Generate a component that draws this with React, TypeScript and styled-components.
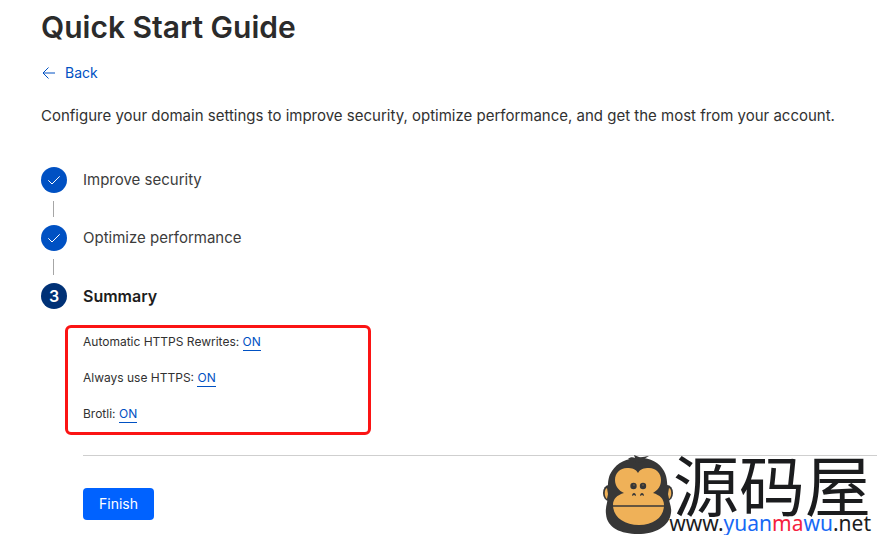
import React from "react";
import styled, { createGlobalStyle, css } from "styled-components";

const GlobalStyle = createGlobalStyle`
  *, *::before, *::after { box-sizing: border-box; }
  body {
    margin: 0;
    background: #fff;
    color: #313131;
    font-family: Inter, "Liberation Sans", sans-serif;
    font-size: 15px;
  }
`;

const Page = styled.main`
  position: relative;
  display: flex;
  flex-direction: column;
  align-items: flex-start;
  min-height: 100vh;
  padding: 7px 0 15px 41px;
  overflow: hidden;
`;

const Title = styled.h1`
  margin: 0;
  font-size: 30px;
  line-height: 40px;
  font-weight: 600;
  color: #2b2b2b;
`;

const BackLink = styled.a`
  display: flex;
  align-items: center;
  gap: 8px;
  margin-top: 16px;
  font-size: 14px;
  line-height: 20px;
  color: #0051c3;
  text-decoration: none;
`;

const Intro = styled.p`
  margin: 21px 0 39px;
  font-size: 15px;
  line-height: 24px;
`;

const Steps = styled.ol`
  display: flex;
  flex-direction: column;
  gap: 32px;
  margin: 0;
  padding: 0;
  list-style: none;
`;

const Step = styled.li<{ $current?: boolean }>`
  position: relative;
  display: flex;
  align-items: center;
  gap: 16px;
  line-height: 26px;
  color: #3c3c3c;
  ${(p) =>
    p.$current
      ? css`
          font-size: 16px;
          font-weight: 600;
          color: #1d1d1d;
        `
      : css`
          &::after {
            content: "";
            position: absolute;
            left: 12px;
            top: 34px;
            width: 1px;
            height: 16px;
            background: #a6a6a6;
          }
        `}
`;

const Marker = styled.span<{ $current?: boolean }>`
  display: flex;
  align-items: center;
  justify-content: center;
  width: 26px;
  height: 26px;
  border-radius: 50%;
  color: #fff;
  background: ${(p) => (p.$current ? "#003176" : "#0051c3")};
`;

const Summary = styled.ul`
  display: flex;
  flex-direction: column;
  gap: 18px;
  width: 306px;
  max-width: 100%;
  margin: 16px 0 0 24px;
  padding: 5px 15px 9px;
  border: 3px solid #fb1414;
  border-radius: 6px;
  list-style: none;
  font-size: 12px;
  line-height: 18px;
`;

const StateLink = styled.a`
  color: #0051c3;
  text-decoration: none;
  border-bottom: 1px solid #0051c3;
  padding-bottom: 1px;
`;

const Divider = styled.hr`
  align-self: stretch;
  margin: 20px 0 32px 42px;
  border: 0;
  border-top: 1px solid #cfcfcf;
`;

const FinishButton = styled.button`
  margin-left: 42px;
  padding: 0 16px;
  border: 0;
  border-radius: 4px;
  background: #0062ff;
  color: #fff;
  font-family: inherit;
  font-size: 14px;
  line-height: 32px;
`;

const Watermark = styled.div`
  position: absolute;
  right: 6px;
  bottom: 0;
  display: flex;
  align-items: flex-end;
`;

const WatermarkText = styled.div`
  display: flex;
  flex-direction: column;
  align-items: flex-end;
  margin-left: -5px;
  color: #1b1c1e;
`;

const SiteName = styled.span`
  font-family: "Noto Sans CJK SC", sans-serif;
  font-size: 66px;
  line-height: 58px;
`;

const SiteUrl = styled.span`
  font-family: "Noto Sans", sans-serif;
  font-size: 21px;
  line-height: 24px;
`;

const Tint = styled.span<{ $color: string }>`
  color: ${(p) => p.$color};
`;

const ArrowLeft = () => (
  <svg width="16" height="16" viewBox="0 0 16 16" fill="none" stroke="currentColor" aria-hidden="true">
    <path d="M14 8H2.500M7.500 2.500 2 8l5.500 5.500" />
  </svg>
);

const Check = () => (
  <svg width="14" height="14" viewBox="0 0 14 14" fill="none" stroke="currentColor" aria-hidden="true">
    <path d="M1.300 7.300 5 11l7.700-7.700" />
  </svg>
);

const Monkey = () => (
  <svg width="71" height="80" viewBox="0 0 71 80" aria-hidden="true">
    <g fill="#373737">
      <ellipse cx="6" cy="38" rx="6" ry="8" />
      <ellipse cx="64" cy="38" rx="6" ry="8" />
      <path d="M35 3C45 2 56 7 61 16c4 7 3 16 4 24 1 7 4 12 3 18-2 14-16 21-33 21S4 73 3 59c-1-7 2-12 2-19 0-9-1-17 4-24C14 8 24 3 35 3Z" />
      <path d="M25 4c2-2 5-2 7-1l-1-3 5 2c3 1 6-1 10-1l-5 3 3 1-9 3Z" />
    </g>
    <g fill="#efb158">
      <path d="M4 33c-3 1-3 9 0 11l1-5Z" />
      <path d="M66 33c3 1 3 9 0 11l-1-5Z" />
      <path d="M35 18c2-4 6-5 11-5 7 0 12 5 12 12 0 6-3 10-8 13 7 2 11 6 11 12 0 12-10 20-25 20S10 62 10 50c0-6 4-10 11-12-5-2-9-7-9-13 0-7 5-12 12-12 5 0 9 1 11 5Z" />
    </g>
    <g fill="#373737">
      <circle cx="30.500" cy="31" r="3.200" />
      <circle cx="40" cy="31" r="3.200" />
      <path d="M29 41c0-4 4-4 4 0l-2-1ZM37 41c0-4 4-4 4 0l-2-1Z" />
    </g>
    <path d="M10 51h51" stroke="#373737" strokeWidth="1.500" />
    <circle cx="31" cy="30" r=".7" fill="#a77b42" />
    <circle cx="40" cy="30" r=".7" fill="#a77b42" />
  </svg>
);

const settings = ["Automatic HTTPS Rewrites", "Always use HTTPS", "Brotli"];

export default function App() {
  return (
    <>
      <GlobalStyle />
      <Page>
        <Title>Quick Start Guide</Title>
        <BackLink href="#back">
          <ArrowLeft />
          Back
        </BackLink>
        <Intro>
          Configure your domain settings to improve security, optimize performance, and get the most from your account.
        </Intro>
        <Steps>
          <Step>
            <Marker><Check /></Marker>
            Improve security
          </Step>
          <Step>
            <Marker><Check /></Marker>
            Optimize performance
          </Step>
          <Step $current aria-current="step">
            <Marker $current>3</Marker>
            Summary
          </Step>
        </Steps>
        <Summary>
          {settings.map((name) => (
            <li key={name}>
              {name}: <StateLink href="#settings">ON</StateLink>
            </li>
          ))}
        </Summary>
        <Divider />
        <FinishButton type="button">Finish</FinishButton>
        <Watermark>
          <Monkey />
          <WatermarkText>
            <SiteName lang="zh-CN">源码屋</SiteName>
            <SiteUrl>
              www.<Tint $color="#1769f5">yuan</Tint>
              <Tint $color="#f5223d">ma</Tint>
              <Tint $color="#1769f5">wu</Tint>.net
            </SiteUrl>
          </WatermarkText>
        </Watermark>
      </Page>
    </>
  );
}
